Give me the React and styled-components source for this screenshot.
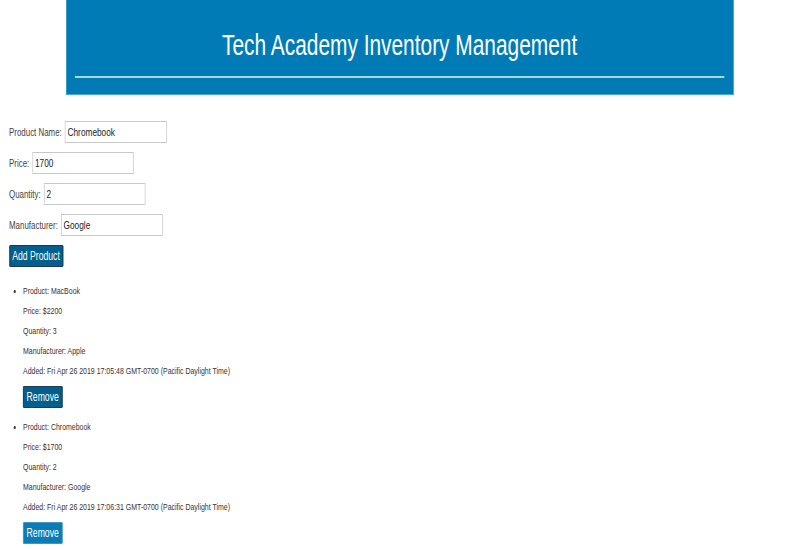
import React from "react";
import styled, { createGlobalStyle } from "styled-components";

// The reference is a horizontally condensed rendering of an Arial page;
// the whole page is drawn at full width and condensed by this factor.
const SQUEEZE = 0.72;
const w = (px) => `${(px / SQUEEZE).toFixed(2)}px`;

const Global = createGlobalStyle`
  html, body { margin: 0; padding: 0; background: #fff; overflow: hidden; }
  body { font-family: "Liberation Sans", Arial, sans-serif; }
`;

const Page = styled.div`
  width: ${w(800)};
  transform: scaleX(${SQUEEZE});
  transform-origin: 0 0;
`;

const Header = styled.header`
  width: ${w(668)};
  height: 95px;
  margin: 0 auto;
  box-sizing: border-box;
  padding: 23px ${w(9)} 0;
  background: #007bb6;
  border-right: 1px solid #4aa6d6;
  border-bottom: 1px solid #4aa6d6;
`;

const Title = styled.h1`
  margin: 0;
  height: 45px;
  font-weight: normal;
  font-size: 29px;
  line-height: 44px;
  color: #fff;
  text-align: center;
`;

const Rule = styled.div`
  height: 2px;
  margin-top: 8px;
  background: #a6d8f2;
`;

const Form = styled.form`
  display: flex;
  flex-direction: column;
  align-items: flex-start;
  gap: 9px;
  padding: 26px ${w(9)} 0;
`;

const Row = styled.label`
  display: flex;
  align-items: center;
  gap: ${w(3)};
  height: 22px;
  font-size: 11px;
  color: #444;
`;

const Input = styled.input`
  box-sizing: border-box;
  width: ${w(102)};
  height: 22px;
  margin: 0;
  padding: 0 ${w(2)};
  border: 1px solid #c8c8c8;
  font-family: inherit;
  font-size: 11.5px;
  color: #222;
  outline: none;
`;

const Button = styled.button`
  box-sizing: border-box;
  height: 22px;
  margin: 0;
  padding: 0 ${(p) => p.$pad || "4px"};
  font-family: inherit;
  font-size: 12px;
  color: #fff;
  background: ${(p) => (p.$dark ? "#005f8c" : "#0a7cb6")};
  border: 1px solid ${(p) => (p.$dark ? "#12283a" : "#3e8fbc")};
  border-radius: 1px;
  cursor: pointer;
`;

const List = styled.ul`
  margin: 13px 0 0;
  padding: 0 0 0 ${w(23)};
  font-size: 9.7px;
  color: #3a3030;
`;

const Item = styled.li`
  margin-bottom: 8px;
  &::marker { font-size: 11px; }
`;

const Line = styled.div`
  line-height: ${(p) => (p.$first ? "21px" : "20px")};
`;

const ItemButton = styled(Button)`
  margin-top: 5px;
`;

const products = [
  {
    name: "MacBook",
    price: 2200,
    quantity: 3,
    manufacturer: "Apple",
    added: "Fri Apr 26 2019 17:05:48 GMT-0700 (Pacific Daylight Time)",
    dark: true,
  },
  {
    name: "Chromebook",
    price: 1700,
    quantity: 2,
    manufacturer: "Google",
    added: "Fri Apr 26 2019 17:06:31 GMT-0700 (Pacific Daylight Time)",
    dark: false,
  },
];

export default function App() {
  return (
    <>
      <Global />
      <Page>
        <Header>
          <Title>Tech Academy Inventory Management</Title>
          <Rule />
        </Header>
        <Form onSubmit={(e) => e.preventDefault()}>
          <Row>
            Product Name: <Input defaultValue="Chromebook" />
          </Row>
          <Row>
            Price: <Input defaultValue="1700" />
          </Row>
          <Row>
            Quantity: <Input defaultValue="2" />
          </Row>
          <Row>
            Manufacturer: <Input defaultValue="Google" />
          </Row>
          <Button $dark $pad="3.5px" type="submit">Add Product</Button>
        </Form>
        <List>
          {products.map((p) => (
            <Item key={p.name}>
              <Line $first>Product: {p.name}</Line>
              <Line>Price: ${p.price}</Line>
              <Line>Quantity: {p.quantity}</Line>
              <Line>Manufacturer: {p.manufacturer}</Line>
              <Line>Added: {p.added}</Line>
              <ItemButton $dark={p.dark} type="button">Remove</ItemButton>
            </Item>
          ))}
        </List>
      </Page>
    </>
  );
}
